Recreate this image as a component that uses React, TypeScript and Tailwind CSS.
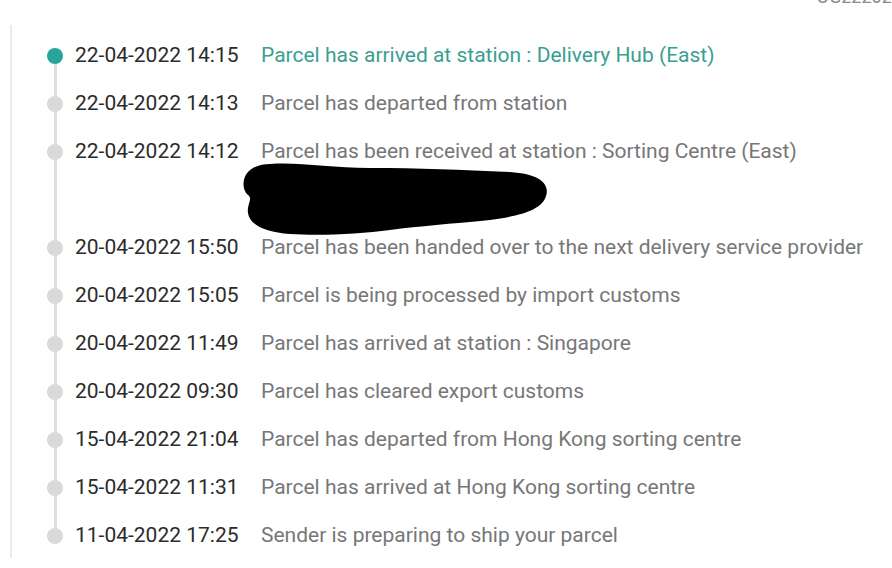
import React from 'react';

const events = [
    { date: '22-04-2022 14:15', text: 'Parcel has arrived at station : Delivery Hub (East)' },
    { date: '22-04-2022 14:13', text: 'Parcel has departed from station' },
    { date: '22-04-2022 14:12', text: 'Parcel has been received at station : Sorting Centre (East)' },
    { date: '', text: '' },
    { date: '20-04-2022 15:50', text: 'Parcel has been handed over to the next delivery service provider' },
    { date: '20-04-2022 15:05', text: 'Parcel is being processed by import customs' },
    { date: '20-04-2022 11:49', text: 'Parcel has arrived at station : Singapore' },
    { date: '20-04-2022 09:30', text: 'Parcel has cleared export customs' },
    { date: '15-04-2022 21:04', text: 'Parcel has departed from Hong Kong sorting centre' },
    { date: '15-04-2022 11:31', text: 'Parcel has arrived at Hong Kong sorting centre' },
    { date: '11-04-2022 17:25', text: 'Sender is preparing to ship your parcel' },
];

function Row({ date, text, index, last }: { date: string, text: string, index: number, last: boolean }) {
    const current = index === 0;
    return (
        <div className="flex h-[48px] items-center">
            <div className="relative flex h-full w-[16px] flex-col items-center justify-center ml-[35px]">
                {index > 0 && <div className="absolute top-0 h-1/2 w-[3px] bg-[#dedede]" />}
                {!last && <div className="absolute bottom-0 h-1/2 w-[3px] bg-[#dedede]" />}
                {date && (
                    <div className={`relative h-[16px] w-[16px] rounded-full ${current ? 'bg-[#26a69a]' : 'bg-[#d9d9d9]'}`} />
                )}
            </div>
            <div className="ml-[12px] w-[186px] text-[21px] text-[#2b2b2b]">{date}</div>
            <div className={`text-[21px] whitespace-nowrap ${current ? 'text-[#3a9f90]' : 'text-[#777777]'}`}>{text}</div>
        </div>
    );
}

export default function App() {
    return (
        <div className="relative h-[568px] w-[892px] overflow-hidden bg-white" style={{ fontFamily: 'Roboto, "Liberation Sans", sans-serif' }}>
            <span className="absolute right-[-20px] top-[-17px] text-[18px] text-[#8a8a8a]">OG2220220</span>
            <div className="ml-[10px] mt-[25px] h-[533px] border-l-2 border-[#ebebeb] pt-[7px]">
                {events.map((e, i) => (
                    <Row key={i} date={e.date} text={e.text} index={i} last={i === events.length - 1} />
                ))}
            </div>
            <svg className="absolute left-[240px] top-[158px]" width="312" height="80" viewBox="0 0 312 80">
                <path
                    d="M30 6 C60 4 90 10 130 10 C180 10 220 12 270 14 C300 16 310 26 306 38 C302 52 280 58 250 62 C210 66 180 68 150 72 C120 76 80 78 50 76 C20 74 6 64 8 50 C9 44 12 40 8 37 C2 32 2 20 8 14 C14 8 22 6 30 6 Z"
                    fill="#000"
                />
            </svg>
        </div>
    );
}
